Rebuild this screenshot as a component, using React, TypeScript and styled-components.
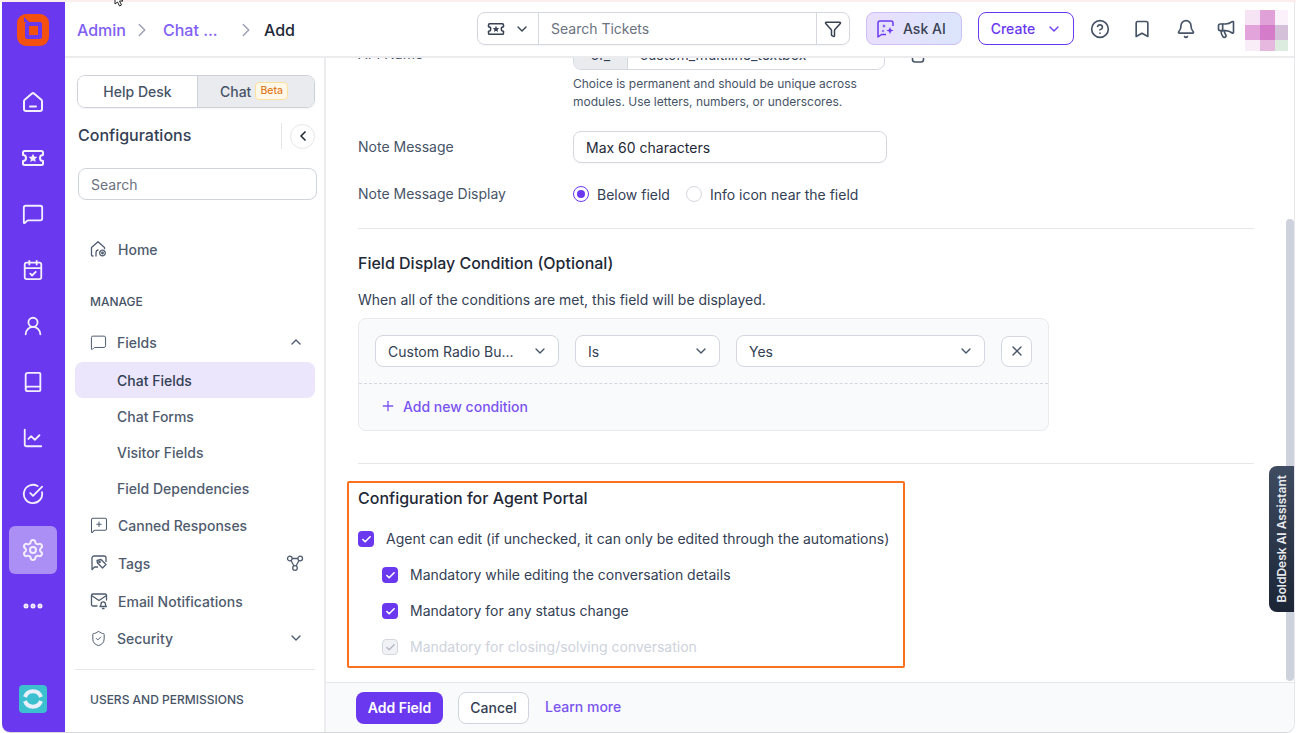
import React from "react";
import styled, { createGlobalStyle } from "styled-components";
import {
  Bell, Bookmark, Check, ChevronDown, ChevronLeft, ChevronRight, ChevronUp,
  CircleHelp, Ellipsis, Megaphone, MessageSquare, MessageSquarePlus, Plus, Settings, ShieldCheck, UserRound, X, Funnel,
  Book, ChartLine, CircleCheckBig, CalendarCheck,
} from "lucide-react";

const Global = createGlobalStyle`
  html, body { margin: 0; padding: 0; background: #fff; }
  #root { width: 1296px; height: 733px; overflow: hidden; }
  * { box-sizing: border-box; }
  body { font-family: Inter, "Noto Sans", sans-serif; font-size: 14px; color: #1f2937; }
`;

const Page = styled.div`
  position: relative; width: 1296px; height: 733px; padding: 2px 2px 1px 2px; background: #fff;
  border-top: 0; display: flex;
  &::before { content: ""; position: absolute; left: 0; right: 0; top: 0; height: 2px; background: #fdeeee; }
`;
const Windowed = styled.div`
  flex: 1; display: flex; min-width: 0; border-radius: 0 0 8px 8px; overflow: hidden;
  box-shadow: 0 1px 0 #d5d7db, 1px 0 0 #e5e7eb;
`;
const Rail = styled.nav`
  width: 63px; flex: none; background: #6a38ee; display: flex; flex-direction: column; align-items: center;
  padding: 12px 1px 0 0; color: #fff;
`;
const Logo = styled.div`width: 32px; height: 32px; margin-bottom: 32px;`;
const RailItem = styled.div<{ $active?: boolean }>`
  width: 48px; height: 48px; flex: none; margin-bottom: 8px; display: flex; align-items: center; justify-content: center;
  border-radius: 6px; background: ${(p) => (p.$active ? "#ab8ff5" : "transparent")}; color: #f3eefe;
`;
const RailSpacer = styled.div`flex: 1;`;
const AppIcon = styled.div`width: 28px; height: 28px; margin-bottom: 19px;`;

const Body = styled.div`flex: 1; min-width: 0; display: flex; flex-direction: column;`;
const Header = styled.header`
  height: 56px; flex: none; border-bottom: 2px solid #ececee; background: #fff; display: flex; align-items: center;
  padding-left: 12px; position: relative; z-index: 2;
`;
const Crumbs = styled.div`width: 400px; flex: none; display: flex; align-items: center; font-size: 16px; margin-top: 1px;`;
const Crumb = styled.span<{ $w?: number; $current?: boolean }>`
  color: ${(p) => (p.$current ? "#1f2937" : "#8060f2")}; width: ${(p) => (p.$w ? `${p.$w}px` : "auto")};
  font-weight: 500; white-space: nowrap;
`;
const CrumbSep = styled.span<{ $w: number; $pl: number }>`
  width: ${(p) => p.$w}px; display: flex; padding-left: ${(p) => p.$pl}px; color: #9aa0b2; flex: none;
`;
const SearchGroup = styled.div`
  width: 373px; height: 33px; flex: none; border: 1px solid #d4d6e0; border-radius: 8px; display: flex; align-items: stretch;
  margin-top: -1px; box-shadow: 0 1px 2px rgba(16,24,40,.05);
`;
const SearchType = styled.div`
  width: 61px; display: flex; align-items: center; justify-content: center; gap: 9px; border-right: 1px solid #d4d6e0; color: #374151;
`;
const SearchText = styled.div`flex: 1; padding-left: 12px; display: flex; align-items: center; color: #6b7280; font-size: 14px;`;
const SearchFilter = styled.div`
  width: 33px; display: flex; align-items: center; justify-content: center; border-left: 1px solid #d4d6e0; color: #374151;
`;
const AskAi = styled.div`
  width: 96px; height: 33px; margin-left: 16px; flex: none; border: 1px solid #cdbdf8; border-radius: 8px; margin-top: -1px;
  background: linear-gradient(90deg, #e9dffc 0%, #dbe5fb 100%); display: flex; align-items: center; gap: 7px; padding-left: 9px;
  color: #374151; font-weight: 500; font-size: 14px;
`;
const CreateButton = styled.div`
  width: 96px; height: 33px; margin-left: 16px; flex: none; border: 1px solid #6a38ee; border-radius: 8px; margin-top: -1px;
  display: flex; align-items: center; justify-content: center; gap: 11px; padding-left: 1px; color: #6a38ee; font-weight: 500; font-size: 14px;
`;
const HeaderIcons = styled.div`
  display: flex; align-items: center; margin-left: 16px; gap: 22px; color: #475467; flex: none;
  svg:nth-child(3) { margin: 0 -2px 0 2px; }
`;
const Avatar = styled.div`
  display: grid; grid-template-columns: 15px 15px 13px; grid-template-rows: 15px 15px 11px; margin-left: 9px; margin-top: 2px; flex: none;
`;
const AvatarCell = styled.i<{ $c: string }>`display: block; background: ${(p) => p.$c};`;

const Columns = styled.div`flex: 1; min-height: 0; display: flex;`;
const Sidebar = styled.aside`
  width: 261px; flex: none; border-right: 2px solid #ececee; padding: 17px 9px 0 10px; overflow: hidden;
`;
const Tabs = styled.div`
  margin-left: 2px; height: 33px; border: 1px solid #ced1da; border-radius: 8px; display: flex; overflow: hidden;
  box-shadow: 0 1px 2px rgba(16,24,40,.05);
`;
const Tab = styled.div<{ $active?: boolean }>`
  flex: ${(p) => (p.$active ? "1" : "none")}; width: ${(p) => (p.$active ? "auto" : "119px")};
  display: flex; align-items: center; justify-content: center; gap: 4px; color: #475467; font-weight: 500; font-size: 14px;
  padding: 0 ${(p) => (p.$active ? 4 : 0)}px 1px 0;
  background: ${(p) => (p.$active ? "#e9ebef" : "#fff")}; border-left: ${(p) => (p.$active ? "1px solid #ced1da" : "0")};
`;
const Beta = styled.span`
  font-size: 10.5px; line-height: 16px; height: 18px; padding: 0 4px; border: 1px solid #fddf9e; background: #fff8e8; color: #e07a1f; border-radius: 4px;
  font-weight: 500; display: inline-flex; align-items: center;
`;
const ConfigRow = styled.div`height: 26px; margin-top: 15px; margin-left: 3px; display: flex; align-items: center;`;
const ConfigTitle = styled.div`flex: 1; font-size: 16px; font-weight: 500; color: #344054; padding-bottom: 2px;`;
const ConfigRule = styled.div`width: 1px; height: 26px; background: #e5e7eb; margin-right: 8px;`;
const Collapse = styled.div`
  width: 25px; height: 25px; border: 1px solid #e5e7eb; border-radius: 50%; display: flex; align-items: center; justify-content: center; color: #1f2937;
`;
const SideSearch = styled.div`
  height: 32px; margin: 19px -2px 0 3px; border: 1px solid #d0d4dc; border-radius: 8px; display: flex; align-items: center; padding-left: 12px;
  color: #6b7280; font-size: 14px;
`;
const NavRow = styled.div<{ $mt?: number; $active?: boolean; $child?: boolean; $gap?: number }>`
  height: 36px; margin-top: ${(p) => p.$mt ?? 0}px; display: flex; align-items: center; border-radius: 8px;
  padding-left: ${(p) => (p.$child ? 42 : 15)}px; padding-right: 11px; gap: ${(p) => p.$gap ?? 10}px;
  background: ${(p) => (p.$active ? "#ebe6fb" : "transparent")};
  color: ${(p) => (p.$active ? "#344054" : "#4f5b6e")}; font-size: 14px; font-weight: 500;
  svg { flex: none; }
`;
const NavLabel = styled.span`flex: 1; white-space: nowrap;`;
const NavHeading = styled.div<{ $mt: number }>`
  height: 20px; line-height: 20px; margin-top: ${(p) => p.$mt}px; padding-left: 15px; font-size: 12px; font-weight: 500; color: #475467; white-space: nowrap;
`;
const NavRule = styled.div`height: 1px; background: #e5e7eb; margin: 13px 0 0 0;`;

const Main = styled.main`flex: 1; min-width: 0; display: flex; flex-direction: column;`;
const Scroll = styled.div`flex: 1; min-height: 0; position: relative; overflow: hidden;`;
const Content = styled.div`margin-top: -20px; padding-left: 32px; width: 928px;`;
const FieldRow = styled.div<{ $mt?: number; $h?: number }>`
  display: flex; align-items: center; margin-top: ${(p) => p.$mt ?? 0}px; height: ${(p) => (p.$h ? `${p.$h}px` : "auto")};
`;
const FieldLabel = styled.div`width: 215px; flex: none; color: #475467; font-size: 14px; margin-top: -2px;`;
const Prefixed = styled.div`
  width: 312px; height: 32px; border: 1px solid #d5d7e0; border-radius: 8px; display: flex; overflow: hidden; background: #fff;
`;
const Prefix = styled.div`
  width: 54px; background: #e9ebef; border-right: 1px solid #d5d7e0; display: flex; align-items: center; justify-content: center; color: #344054; font-size: 14px;
`;
const PrefixValue = styled.div`padding-left: 12px; display: flex; align-items: center; color: #344054; font-size: 14px;`;
const CopyIcon = styled.div`margin-left: 26px; color: #475467; display: flex;`;
const Help = styled.div`margin: 5px 0 0 215px; width: 320px; font-size: 12px; line-height: 18px; color: #475467;`;
const TextInput = styled.div`
  width: 314px; height: 32px; border: 1px solid #d5d7e0; border-radius: 8px; display: flex; align-items: center; padding-left: 12px;
  color: #1f2937; font-size: 14px; background: #fff; box-shadow: 0 1px 2px rgba(16,24,40,.04);
`;
const Radio = styled.span<{ $on?: boolean }>`
  width: 16px; height: 16px; border-radius: 50%; flex: none; background: #fff;
  border: 1px solid ${(p) => (p.$on ? "#6a38ee" : "#d5d7e0")};
  display: inline-flex; align-items: center; justify-content: center;
  &::after { content: ""; width: 8px; height: 8px; border-radius: 50%; background: ${(p) => (p.$on ? "#6a38ee" : "transparent")}; }
`;
const RadioLabel = styled.span<{ $mr?: number }>`margin: 0 ${(p) => p.$mr ?? 0}px 0 8px; color: #344054; font-size: 14px; white-space: nowrap;`;
const Rule = styled.div<{ $mt: number }>`height: 1px; width: 896px; background: #e5e7eb; margin-top: ${(p) => p.$mt}px;`;
const SectionTitle = styled.h3<{ $mt: number }>`
  margin: ${(p) => p.$mt}px 0 0; font-size: 16px; line-height: 24px; font-weight: 500; color: #1f2937;
`;
const Muted = styled.p`margin: 15px 0 0; line-height: 20px; font-size: 14px; color: #344054;`;
const Card = styled.div`
  width: 691px; height: 113px; margin-top: 8px; padding: 16px 16px 0; border: 1px solid #e8eaee; border-radius: 8px; background: #f9fafb;
`;
const CondRow = styled.div`display: flex; gap: 16px; align-items: center;`;
const Select = styled.div<{ $w: number }>`
  width: ${(p) => p.$w}px; height: 32px; border: 1px solid #d5d7e0; border-radius: 8px; background: #fff; display: flex; align-items: center;
  justify-content: space-between; padding: 0 10px 0 12px; color: #344054; font-size: 14px; white-space: nowrap;
  svg { color: #475467; flex: none; }
`;
const Remove = styled.div`
  width: 31px; height: 31px; border: 1px solid #d5d7e0; border-radius: 8px; background: #fff; display: flex; align-items: center; justify-content: center; color: #475467;
`;
const Dashed = styled.div`border-top: 1px dashed #d5d7e0; margin: 16px -16px 0 -16px;`;
const AddCond = styled.div`
  height: 20px; margin: 12px 0 0 5px; display: flex; align-items: center; gap: 7px; color: #7a54f0; font-size: 14px; font-weight: 500;
`;
const Highlight = styled.section`
  margin: 17px 0 0 -11px; width: 558px; height: 187px; border: 2px solid #fa7220; border-radius: 2px; padding: 3px 9px 0;
`;
const CheckRow = styled.div<{ $mt: number; $indent?: boolean; $disabled?: boolean }>`
  display: flex; align-items: center; gap: 12px; height: 20px; margin-top: ${(p) => p.$mt}px; margin-left: ${(p) => (p.$indent ? 24 : 0)}px;
  color: ${(p) => (p.$disabled ? "#cdd2dc" : "#344054")}; font-size: 14px; white-space: nowrap;
`;
const CheckLabel = styled.span`margin-top: -2px;`;
const Box = styled.span<{ $disabled?: boolean }>`
  width: 16px; height: 16px; border-radius: 4px; flex: none; display: inline-flex; align-items: center; justify-content: center;
  background: ${(p) => (p.$disabled ? "#f1f2f5" : "#6a38ee")}; color: ${(p) => (p.$disabled ? "#b4b9c5" : "#fff")};
  border: ${(p) => (p.$disabled ? "1px solid #d5d7e0" : "0")};
`;
const Bar = styled.div`
  position: absolute; right: 0; top: 161px; width: 8px; height: 462px; border-radius: 4px; background: #cdd2dc;
`;
const AiTab = styled.div`
  position: absolute; right: 0; top: 408px; width: 25px; height: 146px; border-radius: 8px 0 0 8px;
  background: linear-gradient(180deg, #3f4b60 0%, #1b2536 100%); color: #e8eaee; display: flex; align-items: center; justify-content: center;
  font-size: 12px; font-weight: 600; writing-mode: vertical-rl; transform: none;
  span { transform: rotate(180deg); white-space: nowrap; }
`;
const Footer = styled.footer`
  height: 50px; flex: none; border-top: 1px solid #e5e7eb; background: #f9fafb; display: flex; align-items: center; padding-left: 30px;
`;
const Primary = styled.div`
  width: 87px; height: 32px; border-radius: 8px; background: #6a38ee; color: #fff; font-weight: 600; font-size: 14px;
  display: flex; align-items: center; justify-content: center; padding-bottom: 1px;
`;
const Secondary = styled.div`
  width: 71px; height: 32px; margin-left: 15px; border-radius: 8px; border: 1px solid #d0d4dc; color: #344054; font-weight: 500; font-size: 14px;
  background: #fff; display: flex; align-items: center; justify-content: center; padding-bottom: 1px;
`;
const LearnMore = styled.span`margin: -2px 0 0 16px; color: #7a54f0; font-size: 14px; font-weight: 500;`;
const Cursor = styled.svg`position: absolute; left: 114px; top: -6px; z-index: 5;`;

const TicketStar = ({ size = 24, w = 2 }: { size?: number; w?: number }) => (
  <svg width={size} height={size} viewBox="0 0 24 24" fill="none" stroke="currentColor" strokeWidth={w} strokeLinejoin="round">
    <path d="M2 6.500A1.500 1.500 0 0 1 3.500 5h17A1.500 1.500 0 0 1 22 6.500V9a3 3 0 0 0 0 6v2.500a1.500 1.500 0 0 1-1.500 1.500h-17A1.500 1.500 0 0 1 2 17.500V15a3 3 0 0 0 0-6Z" />
    <path fill="currentColor" stroke="none" d="m12 7.800 1.300 2.700 3 .4-2.200 2 .6 3L12 14.400l-2.700 1.500.6-3-2.200-2 3-.4Z" />
  </svg>
);
const HomeDash = () => (
  <svg width="24" height="24" viewBox="0 0 24 24" fill="none" stroke="currentColor" strokeWidth="2" strokeLinecap="round" strokeLinejoin="round">
    <path d="M3 11.200a2 2 0 0 1 .7-1.500l7-6a2 2 0 0 1 2.600 0l7 6a2 2 0 0 1 .7 1.500V19a2 2 0 0 1-2 2H5a2 2 0 0 1-2-2Z" />
    <path d="M9 16.500h6" />
  </svg>
);
const LogoMark = () => (
  <svg width="32" height="32" viewBox="0 0 32 32">
    <rect width="32" height="32" rx="9" fill="#f4500f" />
    <rect x="8" y="8" width="17" height="17" rx="2" fill="#6a38ee" />
    <rect x="12" y="12" width="9" height="9" fill="#f4500f" />
    <path d="M7 3l5 5H7Z" fill="#6a38ee" />
  </svg>
);
const AppMark = () => (
  <svg width="28" height="28" viewBox="0 0 28 28" fill="none">
    <rect width="28" height="28" rx="4" fill="#3cc0cf" />
    <path d="M6 12a8.500 8.500 0 0 1 16 0" stroke="#eaf0fb" strokeWidth="4" />
    <path d="M22 16a8.500 8.500 0 0 1-16 0" stroke="#eaf0fb" strokeWidth="4" />
  </svg>
);
const AiIcon = () => (
  <svg width="20" height="20" viewBox="0 0 20 20" fill="none" stroke="#6a38ee" strokeWidth="1.500" strokeLinejoin="round">
    <path d="M17 7V4a2 2 0 0 0-2-2H4a2 2 0 0 0-2 2v14l3.500-2.500H10" />
    <path fill="#6a38ee" stroke="none" d="m14 8 1 2.600 2.600 1-2.600 1-1 2.600-1-2.600-2.600-1 2.600-1Z" />
    <path fill="#6a38ee" stroke="none" d="m8 5 .6 1.400L10 7l-1.400.6L8 9l-.6-1.400L6 7l1.400-.6ZM7 10.500l.5 1 1 .5-1 .5-.5 1-.5-1-1-.5 1-.5Z" />
  </svg>
);
const HomeGear = () => (
  <svg width="18" height="18" viewBox="0 0 18 18" fill="none" stroke="currentColor" strokeWidth="1.300" strokeLinecap="round" strokeLinejoin="round">
    <path d="M3 16h-.4A1.100 1.100 0 0 1 1.500 15V7.500L8 1.800l6.500 5.700v1" />
    <path d="M6 16v-3.500A2.500 2.500 0 0 1 8 10" />
    <circle cx="12.500" cy="13" r="2.800" strokeDasharray="2 .8" />
    <circle cx="12.500" cy="13" r=".8" />
  </svg>
);
const TagChat = () => (
  <svg width="18" height="18" viewBox="0 0 18 18" fill="none" stroke="currentColor" strokeWidth="1.300" strokeLinejoin="round">
    <path d="M8 13H4.500L2 15.500V4a2 2 0 0 1 2-2h10a2 2 0 0 1 2 2v4" />
    <path d="M7 6.500 11 5.500l5 5-3.500 3.500-5-5Z" />
    <circle cx="9.500" cy="8" r=".7" />
  </svg>
);
const MailBell = () => (
  <svg width="18" height="18" viewBox="0 0 18 18" fill="none" stroke="currentColor" strokeWidth="1.300" strokeLinejoin="round" strokeLinecap="round">
    <path d="M7 14H3a1.500 1.500 0 0 1-1.500-1.500v-9A1.500 1.500 0 0 1 3 2h12a1.500 1.500 0 0 1 1.500 1.500V8" />
    <path d="m1.500 3.500 7.500 5 7.500-5" />
    <path d="M10 14.500c1-.8 1-1.500 1-2.500a2.200 2.200 0 0 1 4.400 0c0 1 0 1.700 1 2.500Z" />
    <path d="M12.500 16.500h1.500" />
  </svg>
);
const Nodes = () => (
  <svg width="18" height="18" viewBox="0 0 18 18" fill="none" stroke="currentColor" strokeWidth="1.300">
    <circle cx="3.800" cy="4.500" r="2.300" />
    <circle cx="14.200" cy="4.500" r="2.300" />
    <circle cx="9" cy="14" r="2.300" />
    <path d="M6.100 4.500h5.800M5 6.500l3 5.500M13 6.500l-3 5.500" />
  </svg>
);
const CopyGlyph = () => (
  <svg width="14" height="18" viewBox="0 0 14 18" fill="none" stroke="currentColor" strokeWidth="1.600">
    <rect x="1.500" y="3" width="11" height="14" rx="2.500" />
  </svg>
);

const avatar = ["#f6e3f4", "#e0a0d8", "#fbf1fa", "#e2a4da", "#d47cca", "#d4c0d8", "#f9eef8", "#e6b8e0", "#dcecde"];

export default function App() {
  return (
    <>
      <Global />
      <Page>
        <Cursor width="14" height="14" viewBox="0 0 14 14" fill="#fff" stroke="#222" strokeWidth="1">
          <path d="M1 0v10l2.500-2 2 4 2-1-2-4h3.500Z" />
        </Cursor>
        <Windowed>
          <Rail>
            <Logo><LogoMark /></Logo>
            <RailItem><HomeDash /></RailItem>
            <RailItem><TicketStar /></RailItem>
            <RailItem><MessageSquare size={22} /></RailItem>
            <RailItem><CalendarCheck size={22} /></RailItem>
            <RailItem><UserRound size={22} /></RailItem>
            <RailItem><Book size={22} /></RailItem>
            <RailItem><ChartLine size={22} /></RailItem>
            <RailItem><CircleCheckBig size={22} /></RailItem>
            <RailItem $active><Settings size={24} /></RailItem>
            <RailItem><Ellipsis size={24} strokeWidth={3} /></RailItem>
            <RailSpacer />
            <AppIcon><AppMark /></AppIcon>
          </Rail>
          <Body>
            <Header>
              <Crumbs>
                <Crumb>Admin</Crumb>
                <CrumbSep $w={37} $pl={5}><ChevronRight size={22} strokeWidth={1.5} /></CrumbSep>
                <Crumb $w={54}>Chat ...</Crumb>
                <CrumbSep $w={47} $pl={18}><ChevronRight size={22} strokeWidth={1.5} /></CrumbSep>
                <Crumb $current>Add</Crumb>
              </Crumbs>
              <SearchGroup>
                <SearchType><TicketStar size={18} /><ChevronDown size={16} /></SearchType>
                <SearchText>Search Tickets</SearchText>
                <SearchFilter><Funnel size={18} /></SearchFilter>
              </SearchGroup>
              <AskAi><AiIcon />Ask AI</AskAi>
              <CreateButton>Create<ChevronDown size={16} /></CreateButton>
              <HeaderIcons>
                <CircleHelp size={20} />
                <Bookmark size={20} />
                <Bell size={20} />
                <Megaphone size={20} />
              </HeaderIcons>
              <Avatar>{avatar.map((c, i) => <AvatarCell key={i} $c={c} />)}</Avatar>
            </Header>
            <Columns>
              <Sidebar>
                <Tabs>
                  <Tab>Help Desk</Tab>
                  <Tab $active>Chat <Beta>Beta</Beta></Tab>
                </Tabs>
                <ConfigRow>
                  <ConfigTitle>Configurations</ConfigTitle>
                  <ConfigRule />
                  <Collapse><ChevronLeft size={16} strokeWidth={2.5} /></Collapse>
                </ConfigRow>
                <SideSearch>Search</SideSearch>
                <NavRow $mt={31}><HomeGear /><NavLabel>Home</NavLabel></NavRow>
                <NavHeading $mt={25}>MANAGE</NavHeading>
                <NavRow $mt={12} $gap={10}><MessageSquare size={17} strokeWidth={1.4} /><NavLabel>Fields</NavLabel><ChevronUp size={16} /></NavRow>
                <NavRow $mt={2} $active $child>Chat Fields</NavRow>
                <NavRow $child>Chat Forms</NavRow>
                <NavRow $child>Visitor Fields</NavRow>
                <NavRow $child>Field Dependencies</NavRow>
                <NavRow $mt={1}><MessageSquarePlus size={18} strokeWidth={1.4} /><NavLabel>Canned Responses</NavLabel></NavRow>
                <NavRow $mt={2}><TagChat /><NavLabel>Tags</NavLabel><Nodes /></NavRow>
                <NavRow $mt={2}><MailBell /><NavLabel>Email Notifications</NavLabel></NavRow>
                <NavRow $mt={1} $gap={10}><ShieldCheck size={17} strokeWidth={1.4} /><NavLabel>Security</NavLabel><ChevronDown size={16} /></NavRow>
                <NavRule />
                <NavHeading $mt={20}>USERS AND PERMISSIONS</NavHeading>
              </Sidebar>
              <Main>
                <Scroll>
                  <Content>
                    <FieldRow>
                      <FieldLabel>API Name</FieldLabel>
                      <Prefixed>
                        <Prefix>cf_</Prefix>
                        <PrefixValue>custom_multiline_textbox</PrefixValue>
                      </Prefixed>
                      <CopyIcon><CopyGlyph /></CopyIcon>
                    </FieldRow>
                    <Help>Choice is permanent and should be unique across modules. Use letters, numbers, or underscores.</Help>
                    <FieldRow $mt={20}>
                      <FieldLabel>Note Message</FieldLabel>
                      <TextInput>Max 60 characters</TextInput>
                    </FieldRow>
                    <FieldRow $mt={21} $h={20}>
                      <FieldLabel>Note Message Display</FieldLabel>
                      <Radio $on /><RadioLabel $mr={16}>Below field</RadioLabel>
                      <Radio /><RadioLabel>Info icon near the field</RadioLabel>
                    </FieldRow>
                    <Rule $mt={24} />
                    <SectionTitle $mt={22}>Field Display Condition (Optional)</SectionTitle>
                    <Muted>When all of the conditions are met, this field will be displayed.</Muted>
                    <Card>
                      <CondRow>
                        <Select $w={184}>Custom Radio Bu...<ChevronDown size={16} /></Select>
                        <Select $w={145}>Is<ChevronDown size={16} /></Select>
                        <Select $w={249}>Yes<ChevronDown size={16} /></Select>
                        <Remove><X size={16} /></Remove>
                      </CondRow>
                      <Dashed />
                      <AddCond><Plus size={16} />Add new condition</AddCond>
                    </Card>
                    <Rule $mt={32} />
                    <Highlight>
                      <SectionTitle $mt={0}>Configuration for Agent Portal</SectionTitle>
                      <CheckRow $mt={19}>
                        <Box><Check size={11} strokeWidth={3.5} /></Box>
                        <CheckLabel>Agent can edit (if unchecked, it can only be edited through the automations)</CheckLabel>
                      </CheckRow>
                      <CheckRow $mt={16} $indent><Box><Check size={11} strokeWidth={3.5} /></Box><CheckLabel>Mandatory while editing the conversation details</CheckLabel></CheckRow>
                      <CheckRow $mt={16} $indent><Box><Check size={11} strokeWidth={3.5} /></Box><CheckLabel>Mandatory for any status change</CheckLabel></CheckRow>
                      <CheckRow $mt={16} $indent $disabled><Box $disabled><Check size={11} strokeWidth={3} /></Box><CheckLabel>Mandatory for closing/solving conversation</CheckLabel></CheckRow>
                    </Highlight>
                  </Content>
                  <Bar />
                  <AiTab><span>BoldDesk AI Assistant</span></AiTab>
                </Scroll>
                <Footer>
                  <Primary>Add Field</Primary>
                  <Secondary>Cancel</Secondary>
                  <LearnMore>Learn more</LearnMore>
                </Footer>
              </Main>
            </Columns>
          </Body>
        </Windowed>
      </Page>
    </>
  );
}
